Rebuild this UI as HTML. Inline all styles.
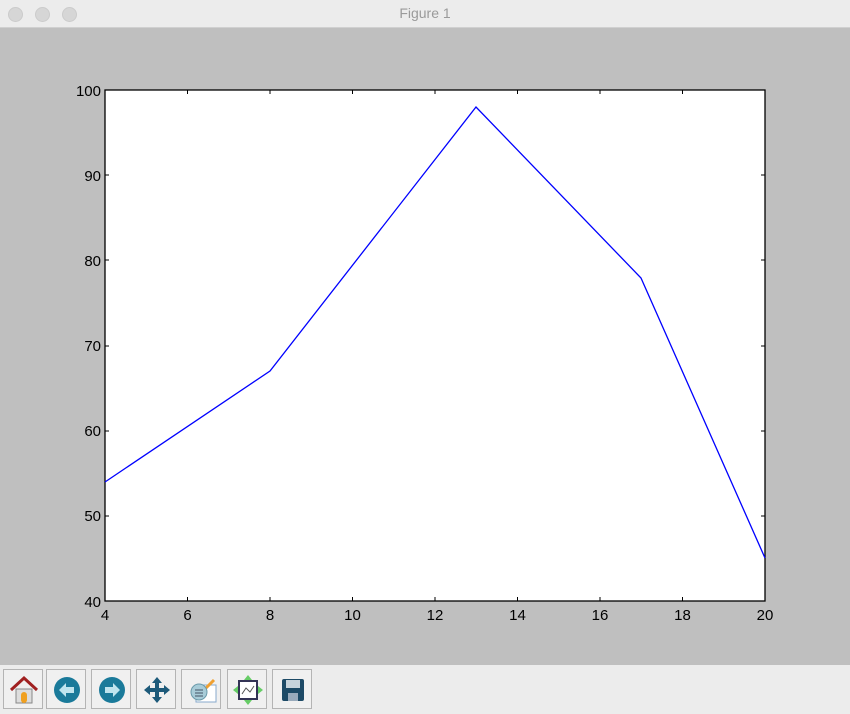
<!DOCTYPE html>
<html><head><style>
body{margin:0;width:850px;height:714px;overflow:hidden;background:#bfbfbf;font-family:"Liberation Sans",sans-serif}
.title{position:absolute;left:0;top:0;width:850px;height:27px;background:#ececec;border-bottom:1px solid #d0d0d0;text-align:center;font-size:14px;line-height:27px;color:#9a9a9a}
.dot{position:absolute;top:7px;width:13px;height:13px;border-radius:50%;background:#d6d6d6;border:1px solid #cbcbcb}
.tb{position:absolute;left:0;top:665px;width:850px;height:49px;background:#ececec}
.btn{position:absolute;top:4px;width:40px;height:40px;border:1px solid #b4b4b4;background:#f0f0f0;box-sizing:border-box}
.btn svg{position:absolute;left:4px;top:4px}
</style></head><body>
<div class="title">Figure 1</div>
<div class="dot" style="left:8px"></div><div class="dot" style="left:35px"></div><div class="dot" style="left:62px"></div>
<svg style="position:absolute;left:0;top:0" width="850" height="665" font-family="Liberation Sans" font-size="15">
<rect x="105" y="90" width="660" height="511" fill="#fff" stroke="#000" stroke-width="1.3"/>
<polyline points="105,482 270,371 476,107 641,278 765,558" fill="none" stroke="#0000ff" stroke-width="1.3"/>
<g stroke="#000" stroke-width="1">
<path d="M105,601v-4M187.5,601v-4M270,601v-4M352.5,601v-4M435,601v-4M517.5,601v-4M600,601v-4M682.5,601v-4M765,601v-4M105,90v4M187.5,90v4M270,90v4M352.5,90v4M435,90v4M517.5,90v4M600,90v4M682.5,90v4M765,90v4"/>
<path d="M105,601h4M105,516h4M105,431h4M105,346h4M105,260h4M105,175h4M105,90h4M765,601h-4M765,516h-4M765,431h-4M765,346h-4M765,260h-4M765,175h-4M765,90h-4"/>
</g>
<g text-anchor="end">
<text x="101" y="607">40</text><text x="101" y="521">50</text><text x="101" y="436">60</text><text x="101" y="351">70</text><text x="101" y="266">80</text><text x="101" y="181">90</text><text x="101" y="96">100</text>
</g>
<g text-anchor="middle">
<text x="105" y="620">4</text><text x="187.5" y="620">6</text><text x="270" y="620">8</text><text x="352.5" y="620">10</text><text x="435" y="620">12</text><text x="517.5" y="620">14</text><text x="600" y="620">16</text><text x="682.5" y="620">18</text><text x="765" y="620">20</text>
</g>
</svg>
<div class="tb">
<div class="btn" style="left:3px"><svg width="32" height="32"><path d="M3,16 L16,4 L29,16" fill="none" stroke="#a02020" stroke-width="3"/><rect x="8" y="15" width="16" height="14" fill="#ddd" stroke="#888"/><rect x="13" y="18" width="6" height="11" rx="3" fill="#f0a020"/></svg></div>
<div class="btn" style="left:46px"><svg width="32" height="32"><circle cx="16" cy="16" r="13" fill="#1a7a9a"/><path d="M8,16 L15,9 V13 H23 V19 H15 V23 Z" fill="#bfe4ee"/></svg></div>
<div class="btn" style="left:91px"><svg width="32" height="32"><circle cx="16" cy="16" r="13" fill="#1a7a9a"/><path d="M24,16 L17,9 V13 H9 V19 H17 V23 Z" fill="#bfe4ee"/></svg></div>
<div class="btn" style="left:136px"><svg width="32" height="32"><path d="M16,3 L21,9 H18 V14 H23 V11 L29,16 L23,21 V18 H18 V23 H21 L16,29 L11,23 H14 V18 H9 V21 L3,16 L9,11 V14 H14 V9 H11 Z" fill="#1d5a7a"/></svg></div>
<div class="btn" style="left:181px"><svg width="32" height="32"><rect x="10" y="11" width="20" height="17" fill="#fff" stroke="#8ac"/><path d="M18,16 L28,6" stroke="#f0a030" stroke-width="3"/><circle cx="13" cy="18" r="8" fill="#a8ccd8" stroke="#6a9aaa"/><path d="M9,16h8M9,19h8M9,22h8" stroke="#456" stroke-width="1"/></svg></div>
<div class="btn" style="left:227px"><svg width="32" height="32"><rect x="7" y="7" width="18" height="18" fill="#fff" stroke="#335" stroke-width="2"/><path d="M10,20 L14,14 L18,18 L22,12" fill="none" stroke="#555"/><path d="M16,1 L20,6 H12Z M16,31 L20,26 H12Z M1,16 L6,12 V20Z M31,16 L26,12 V20Z" fill="#6c6"/></svg></div>
<div class="btn" style="left:272px"><svg width="32" height="32"><rect x="5" y="5" width="22" height="22" rx="2" fill="#1d4a66"/><rect x="9" y="6" width="14" height="8" fill="#c8d4dc"/><rect x="11" y="19" width="10" height="8" fill="#9ab"/></svg></div>
</div>
</body></html>
